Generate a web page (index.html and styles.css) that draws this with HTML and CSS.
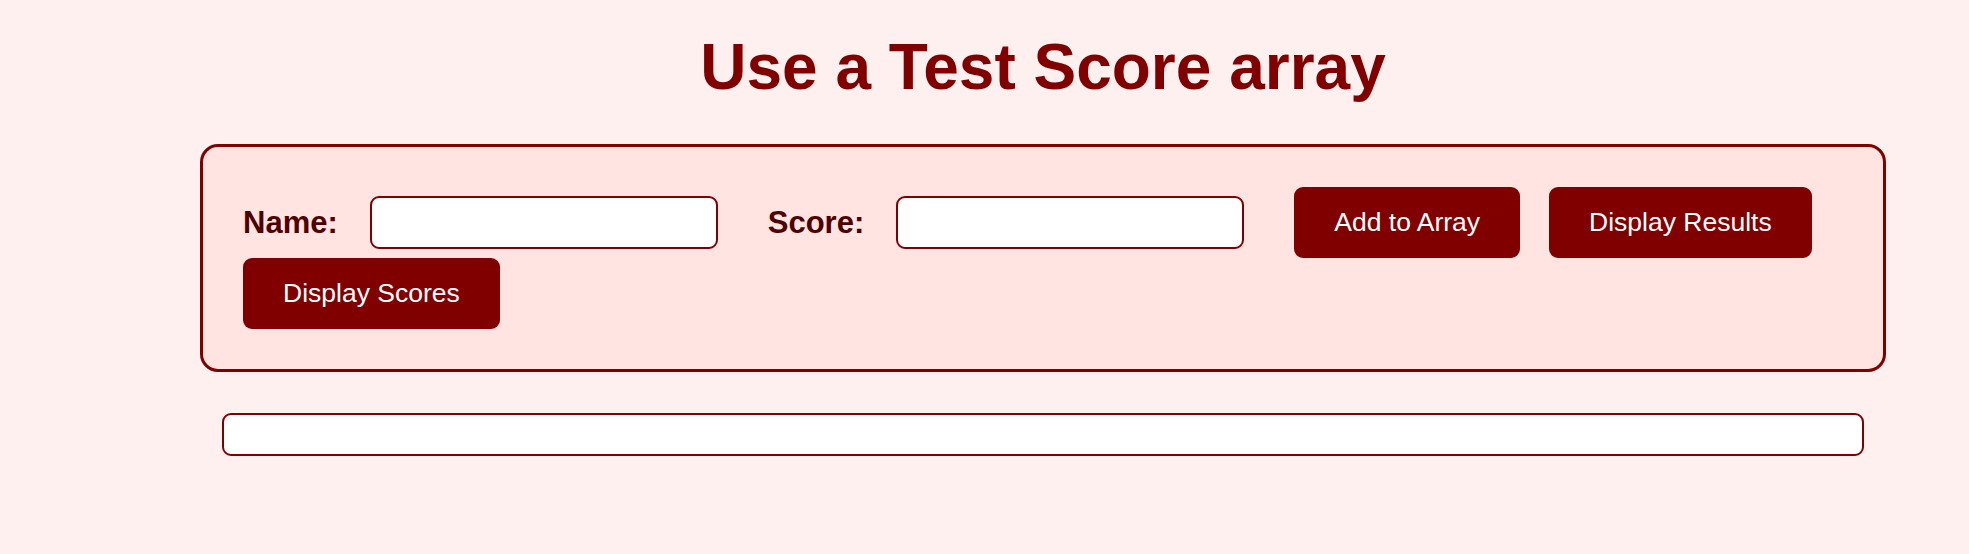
FILE: index.html
```html
<!DOCTYPE html>
<html lang="en">
<head>
<meta charset="utf-8">
<title>Use a Test Score array</title>
<link rel="stylesheet" href="styles.css">
</head>
<body>
<main class="page">
  <h1 class="title">Use a Test Score array</h1>
  <section class="panel">
    <div class="form-row">
      <label class="field-label" for="name">Name:</label>
      <input class="field-input" type="text" id="name">
      <label class="field-label" for="score">Score:</label>
      <input class="field-input" type="text" id="score">
      <button class="action-btn" type="button">Add to Array</button>
      <button class="action-btn" type="button">Display Results</button>
      <button class="action-btn" type="button">Display Scores</button>
    </div>
  </section>
  <div class="output"></div>
</main>
</body>
</html>
```
FILE: styles.css
```css
html, body {
  margin: 0;
  padding: 0;
}

body {
  background: #fdf0ee;
  font-family: "Liberation Sans", Arial, sans-serif;
}

.page {
  margin-left: 200px;
  width: 1686px;
  padding-top: 30px;
}

.title {
  margin: 0 0 40px;
  text-align: center;
  font-size: 64px;
  font-weight: bold;
  color: #800000;
  line-height: normal;
}

.panel {
  background: #ffe4e1;
  border: 3px solid #800000;
  border-radius: 18px;
  padding: 40px 40px 40px;
}

.form-row {
  display: flex;
  flex-wrap: wrap;
  align-items: center;
}

.field-label {
  font-size: 31px;
  font-weight: bold;
  color: #4f0000;
  margin-right: 32px;
}

.field-input {
  box-sizing: border-box;
  width: 348px;
  height: 53px;
  margin: 0 50px 0 0;
  padding: 0 12px;
  border: 2px solid #800000;
  border-radius: 9px;
  background: #ffffff;
  font-family: inherit;
  font-size: 20px;
}

.action-btn {
  background: #800000;
  color: #ffffff;
  border: none;
  border-radius: 9px;
  padding: 20px 40px;
  margin: 0 29px 0 0;
  font-family: inherit;
  font-size: 26.5px;
  line-height: normal;
  cursor: pointer;
}

.output {
  box-sizing: border-box;
  height: 43px;
  margin: 41px 22px 0;
  background: #ffffff;
  border: 2px solid #800000;
  border-radius: 9px;
}
```
